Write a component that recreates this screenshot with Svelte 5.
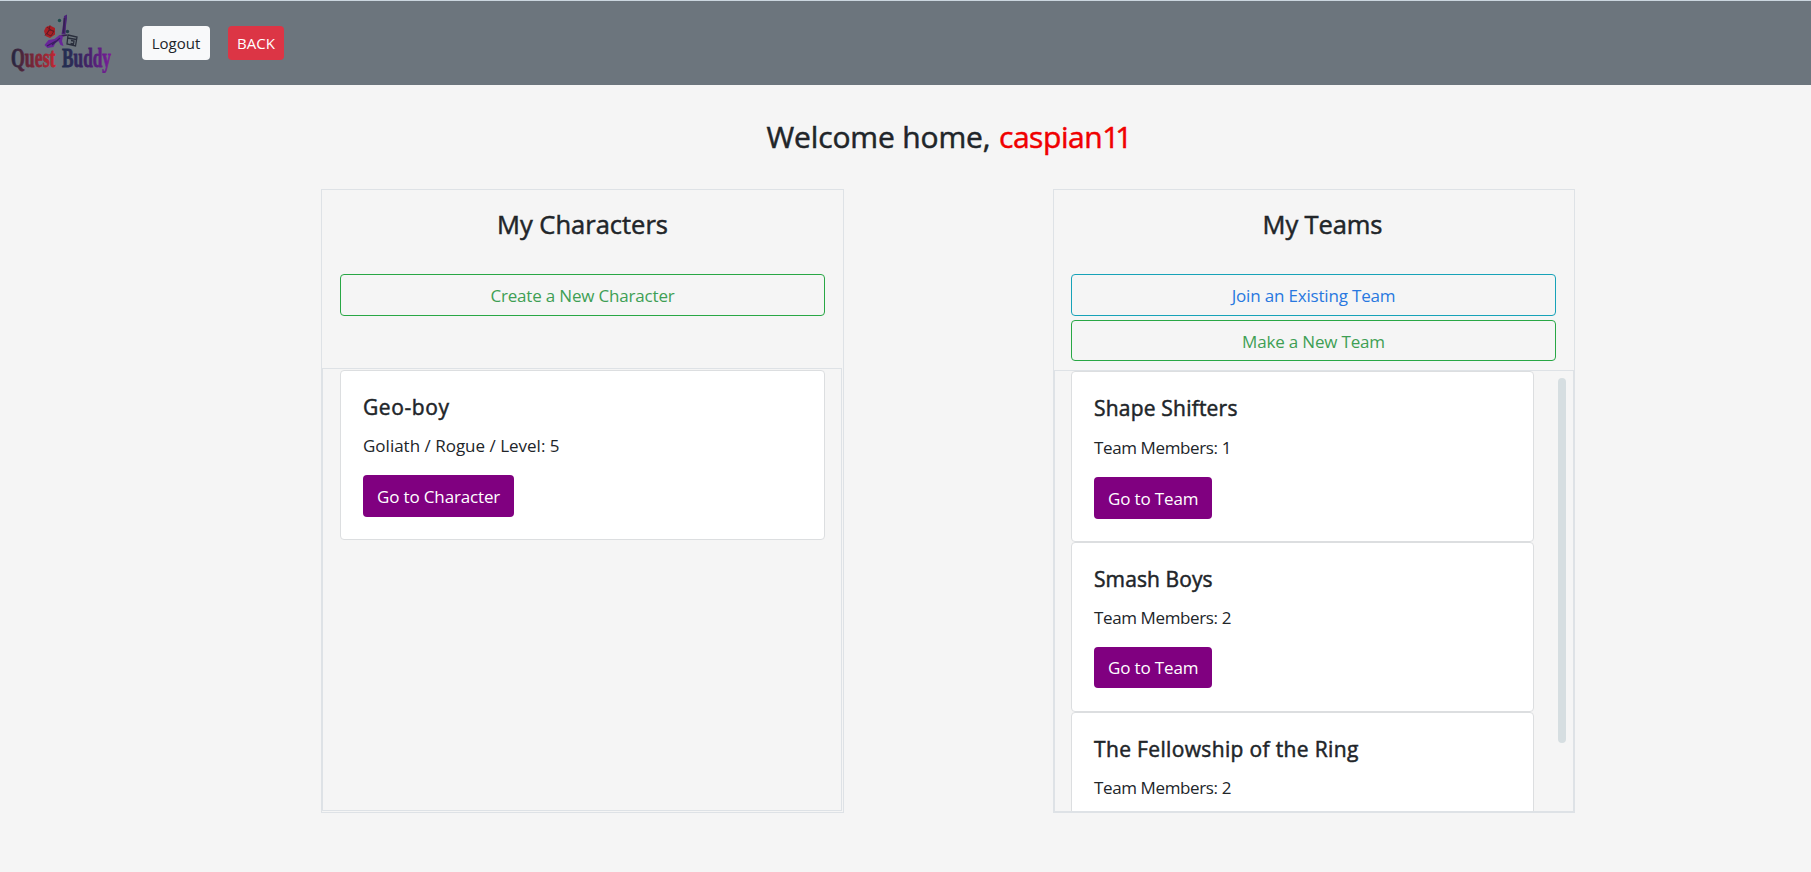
<script>
  const characters = [{ name: 'Geo-boy', detail: 'Goliath / Rogue / Level: 5' }];
  const teams = [
    { name: 'Shape Shifters', members: 1 },
    { name: 'Smash Boys', members: 2 },
    { name: 'The Fellowship of the Ring', members: 2 }
  ];
</script>

<header class="navbar">
  <svg class="logo" viewBox="0 0 104 60" role="img" aria-label="Quest Buddy">
    <defs>
      <linearGradient id="quest" x1="0" x2="1"><stop offset="0" stop-color="#202641" /><stop offset=".45" stop-color="#702637" /><stop offset="1" stop-color="#c22632" /></linearGradient>
      <linearGradient id="buddy" x1="0" x2="1"><stop offset="0" stop-color="#20304f" /><stop offset=".45" stop-color="#3c2361" /><stop offset="1" stop-color="#7c1c9e" /></linearGradient>
    </defs>
    <path d="M40 12.500l5 2.500v6.500l-5 3.500-4.500-2-1.500-5 2-4z" fill="#a81f25" />
    <path d="M40 12.500l-1 5-4 5M37 14l7 5M39 17l5 1-3 5-4-2z" fill="none" stroke="#5c1a25" stroke-width=".9" />
    <path d="M54 3l3-1.500v4l-1 7-.5 9h-4l1.500-10z" fill="#4a2476" />
    <path d="M54.500 5l-1 15M49 23.500l8-1.500" stroke="#35214f" stroke-width="1.500" fill="none" />
    <path d="M34.500 32l4-5 6-1 5-4 3.500 1-1 5 1.500 5-3-1-2-4-3 2-2 4-6 1z" fill="#68269a" />
    <path d="M37 33l9-5M42 32l8-7" stroke="#37205e" stroke-width="1.200" />
    <path d="M58 22l9 2-1.500 9-8.500-2zM57.500 25l9 1.500M61 27.500l3 .5-.5 3-3-.5" fill="none" stroke="#292e3c" stroke-width="1.300" />
    <circle cx="49.500" cy="7.500" r="1.700" fill="#1f4a4c" />
    <circle cx="57.500" cy="18.500" r="1.700" fill="#233b49" />
    <text transform="translate(1 53.500) scale(.66 1)" fill="url(#quest)" stroke="url(#quest)">Quest</text>
    <text transform="translate(52 53.500) scale(.64 1)" fill="url(#buddy)" stroke="url(#buddy)">Buddy</text>
  </svg>
  <button class="small light">Logout</button>
  <button class="small danger">BACK</button>
</header>

<main>
  <h3>Welcome home, <span class="user">caspian<span class="digits">11</span></span></h3>
  <div class="columns">
    <section class="panel left">
      <div class="top">
        <h4>My Characters</h4>
        <button class="outline green">Create a New Character</button>
      </div>
      <div class="list">
        {#each characters as c}
          <article class="card">
            <h5>{c.name}</h5>
            <p>{c.detail}</p>
            <button class="go">Go to Character</button>
          </article>
        {/each}
      </div>
    </section>
    <section class="panel right">
      <div class="top">
        <h4>My Teams</h4>
        <button class="outline blue">Join an Existing Team</button>
        <button class="outline green">Make a New Team</button>
      </div>
      <div class="list">
        <div class="cards">
          {#each teams as t}
            <article class="card">
              <h5>{t.name}</h5>
              <p>Team Members: {t.members}</p>
              <button class="go">Go to Team</button>
            </article>
          {/each}
        </div>
        <div class="thumb"></div>
      </div>
    </section>
  </div>
</main>

<style>
  :global(body) { background: #f5f5f5; color: #212529; font-family: "Open Sans", "Noto Sans", sans-serif; font-size: 17px; overflow: hidden; }
  h3, h4, h5, p { margin: 0; }
  h3, h4, h5 { font-weight: 400; -webkit-text-stroke: 0.5px currentColor; }
  button { font-family: inherit; font-size: 17px; padding: 0; border-radius: 4px; box-sizing: border-box; }
  .navbar { box-sizing: border-box; height: 85px; border-top: 1px solid #cbd6df; background: #6c757d; display: flex; align-items: center; padding-left: 10px; }
  .logo { width: 104px; height: 60px; margin-right: 28px; }
  .logo text { font: bold 27px "Liberation Serif", serif; stroke-width: 0.8px; }
  .small { height: 34px; font-size: 15px; border: 0; }
  .light { width: 68px; background: #f8f9fa; color: #212529; margin-right: 18px; }
  .danger { width: 56px; background: #dc3545; color: #fff; }
  h3 { font-size: 30px; line-height: 37px; letter-spacing: -0.15px; text-align: center; padding: 33px 0 34px 88px; }
  .user { color: #f00000; letter-spacing: -0.45px; margin-left: 1px; }
  .digits { letter-spacing: -4px; margin-right: 4px; }
  .columns { display: grid; grid-template-columns: 523px 522px; column-gap: 209px; padding-left: 321px; }
  .panel { box-sizing: border-box; height: 624px; border: 1px solid #dee2e6; display: flex; flex-direction: column; }
  .top { box-sizing: border-box; height: 178px; padding: 18px 18px 0; display: flex; flex-direction: column; gap: 4px; flex: none; }
  .right .top { height: 180px; padding-left: 17px; }
  h4 { font-size: 25.500px; line-height: 34px; text-align: center; margin: -1px 0 29px; }
  .right h4 { padding-left: 18px; letter-spacing: -0.1px; }
  .outline { height: 42px; background: none; border: 1px solid; letter-spacing: -0.18px; }
  .outline + .outline { height: 41px; padding-top: 1px; }
  .green { color: #3e9f54; border-color: #28a745; }
  .blue { color: #2878e0; border-color: #17a2b8; }
  .list { box-sizing: border-box; flex: 1; min-height: 0; border: 1px solid #dee2e6; overflow: hidden; display: flex; }
  .left .list { margin: 0 1px 1px 0; padding: 1px 16px 1px 17px; align-items: flex-start; }
  .right .list { padding-left: 16px; }
  .cards { width: 463px; flex: none; }
  .card { box-sizing: border-box; width: 100%; height: 170px; background: #fff; border: 1px solid #dcdee0; border-radius: 4px; padding: 22px; }
  .right .card:first-child { height: 171px; }
  h5 { font-size: 21px; line-height: 28px; margin-bottom: 11px; letter-spacing: 0.2px; }
  .left h5 { letter-spacing: 0.6px; }
  .card:nth-child(2) h5 { letter-spacing: 0.1px; }
  .card:nth-child(3) h5 { letter-spacing: 0.35px; }
  p { line-height: 27px; margin-bottom: 16px; }
  .right .card:first-child p { padding-top: 1px; }
  .right p { letter-spacing: -0.38px; }
  .go { height: 42px; padding: 0 14px; background: purple; color: #fff; border: 0; letter-spacing: -0.15px; }
  .card:nth-child(2) .go { height: 41px; }
  .thumb { width: 8px; height: 365px; border-radius: 4px; background: #d6dee1; margin: 7px 0 0 24px; }
</style>
